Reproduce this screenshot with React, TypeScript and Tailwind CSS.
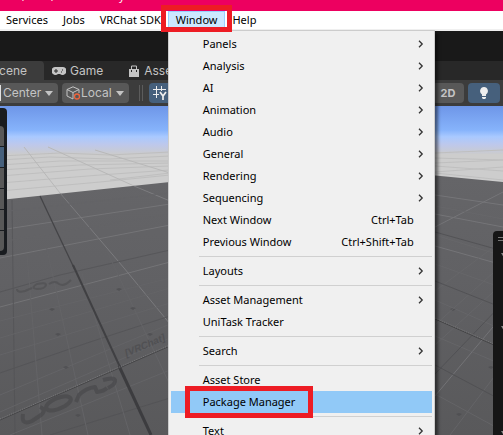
import React from "react";

type Entry = { label: string; shortcut?: string; active?: boolean } | null;

const entries: Entry[] = [
  { label: "Panels" },
  { label: "Analysis" },
  { label: "AI" },
  { label: "Animation" },
  { label: "Audio" },
  { label: "General" },
  { label: "Rendering" },
  { label: "Sequencing" },
  { label: "Next Window", shortcut: "Ctrl+Tab" },
  { label: "Previous Window", shortcut: "Ctrl+Shift+Tab" },
  null,
  { label: "Layouts" },
  null,
  { label: "Asset Management" },
  { label: "UniTask Tracker", shortcut: "" },
  null,
  { label: "Search" },
  null,
  { label: "Asset Store", shortcut: "" },
  { label: "Package Manager", shortcut: "", active: true },
  null,
  { label: "Text" },
];

function Submenu() {
  return (
    <svg className="mr-2 h-2 w-1.5" viewBox="0 0 6 8" fill="none" stroke="#333" strokeWidth="1.3" aria-hidden="true">
      <path d="M1 0.8 4.2 4 1 7.2" />
    </svg>
  );
}

function WindowMenu() {
  return (
    <div role="menu" className="absolute top-full left-0 mt-px w-[267px] border border-[#cccccc] bg-[#f0f0f0] p-0.5 shadow-[3px_3px_3px_rgba(0,0,0,0.5)]">
      {entries.map((e, i) =>
        e === null ? (
          <div key={i} role="separator" className="ml-7 flex h-[7px] items-center">
            <div className="h-px w-full bg-[#d0d0d0]" />
          </div>
        ) : (
          <button
            key={i}
            role="menuitem"
            className={"relative flex h-[22px] w-full items-center justify-between pl-8 text-left " + (e.active ? "bg-[#91c9f7]" : "")}
          >
            <span>{e.label}</span>
            {e.shortcut === undefined ? <Submenu /> : <span className="mr-[18px]">{e.shortcut}</span>}
            {e.active && <span className="pointer-events-none absolute -top-[5px] left-3.5 h-8 w-32 border-[5px] border-[#ed1c24]" />}
          </button>
        ),
      )}
    </div>
  );
}

function Caret() {
  return (
    <svg className="h-[5px] w-2" viewBox="0 0 8 5" fill="#c4c4c4" aria-hidden="true">
      <path d="M0 0h8L4 5z" />
    </svg>
  );
}

const lines = (list: string[], stroke: string, width = 1) => (
  <path d={list.join("")} stroke={stroke} strokeWidth={width} fill="none" />
);

function Scene() {
  return (
    <svg className="absolute inset-0 h-full w-full" viewBox="0 106 503 329" preserveAspectRatio="none" aria-hidden="true">
      <defs>
        <linearGradient id="sky" x1="0" y1="0" x2="0" y2="1">
          <stop offset="0" stopColor="#6e96e8" />
          <stop offset="0.5" stopColor="#86b3fb" />
          <stop offset="0.64" stopColor="#a9c9ff" />
          <stop offset="0.8" stopColor="#bdc8ec" />
          <stop offset="1" stopColor="#cbcbcd" />
        </linearGradient>
        <linearGradient id="floor" x1="0" y1="0" x2="0" y2="1">
          <stop offset="0" stopColor="#656568" />
          <stop offset="0.4" stopColor="#616164" />
          <stop offset="1" stopColor="#59595b" />
        </linearGradient>
      </defs>
      <rect y="106" width="503" height="329" fill="#cdcdcd" />
      <rect y="106" width="503" height="48" fill="url(#sky)" />
      {lines(["M0 156l60-3 50 2 60-3", "M0 160l50-3 60 2 60-3", "M0 165l60-4 110 0", "M0 170l80-5 90-2", "M0 176l90-7 80-3", "M0 183l100-8 70-5", "M0 191l100-9 70-7", "M110 180l60-7"], "#bfbfbf")}
      {lines(["M24 147 60 193", "M48 147 134 186", "M95 150 170 173"], "#b8b8b8")}
      {lines(["M435 153l68-3", "M435 158l68 2", "M435 163l68-3", "M435 166l68 5", "M435 172l68-5", "M435 173l68 7"], "#bfbfbf")}
      <path d="M0 200 170 182V435H0z" fill="url(#floor)" />
      <path d="M430 175 503 182V435H430z" fill="url(#floor)" />
      <g opacity="0.6">
        {lines(["M0 230 170 204", "M0 258 170 225", "M0 307 170 262"], "#808083")}
        {lines(["M60 193 124 268", "M124 268 170 324", "M134 186 170 201"], "#8c8c8f")}
        {lines(["M0 292 60 275 170 250", "M0 373 90 342 170 316", "M50 435 170 398"], "#505053")}
        {lines(["M12 200 15 435"], "#515154")}
      </g>
      {lines(["M0 321 170 278", "M0 338 170 288", "M0 355 170 303", "M0 395 170 324", "M0 412 170 338", "M10 435 170 370", "M27 255 42 435", "M46 245 88 435", "M82 274 130 435", "M105 247 170 385", "M0 212 170 193", "M0 242 170 214"], "#646467")}
      <path d="M40 196 75 270" stroke="#444447" strokeWidth="1.3" fill="none" />
      <path d="M73 265 120 367" stroke="#404043" strokeWidth="2" />
      <path d="M119 366 151 435" stroke="#3c3c3f" strokeWidth="3" />
      <path d="M0 420 170 346" stroke="#464648" />
      <path d="M0 419 170 345" stroke="#7b7b7d" strokeDasharray="1 1" />
      <g fill="none" stroke="#49494c" strokeLinejoin="round">
        <path strokeWidth="4" opacity="0.7" d="M23 414q-2 12 9 7l9-6q6-5-1-8M55 399q-13 7-7 11 6 2 17-4 9-6 4-9-4-2-14 2zM76 402l3-7q7-7 16-8l2 5q7-1 10-4M103 380q10-3 12 0 1 4-7 8" />
        <path strokeWidth="2" opacity="0.5" d="M17 289q0 4 8 2l7-3M37 284q-7 4 0 5 8 0 9-4 0-3-9-1zM49 284q6-4 10 0 5 3 12-4" />
      </g>
      <g transform="translate(126 357) rotate(-23) skewX(-12)" fill="#4b4b4e" opacity="0.7">
        <text fontFamily="Liberation Sans, sans-serif" fontSize="10" fontWeight="bold">[VRChat]</text>
      </g>
      <g fill="#4b4b4e" opacity="0.65">
        {[[52, 309], [58, 334], [66, 367], [78, 415], [119, 289], [133, 308], [150, 334], [453, 309], [491, 367], [459, 414]].map(([x, y]) => (
          <path key={`${x}-${y}`} d={`M${x - 3} ${y}l3-1 3 1-3 2z`} />
        ))}
      </g>
      <g opacity="0.7">
        {lines(["M435 195 503 205", "M435 214 503 227", "M435 246 503 265", "M435 227 503 192", "M435 396 503 315"], "#7d7d80")}
        {lines(["M435 206 503 219", "M435 235 503 256", "M435 291 503 240", "M435 264 503 288", "M435 300 503 330", "M435 336 503 365", "M435 394 503 431", "M435 325 503 264", "M450 435 503 365", "M435 345 503 283"], "#69696c")}
        {lines(["M435 232 503 251", "M435 281 503 308", "M435 365 503 401", "M435 374 503 303"], "#4d4d50")}
      </g>
      <path d="M435 319 503 349" stroke="#444446" />
      <path d="M435 318 503 348" stroke="#777779" strokeDasharray="1 1" />
    </svg>
  );
}

export default function App() {
  return (
    <div className="flex h-screen flex-col overflow-hidden bg-[#191919] font-['Noto_Sans','Noto_Sans_CJK_JP',sans-serif] text-[11px] text-black">
      <header className="h-[11px] shrink-0 overflow-hidden bg-[#ed0060]">
        <div className="-mt-3 flex h-4 pl-[22px] leading-4 text-white">
          <span className="w-[29px]">,</span>
          <span className="w-[68px]">,</span>
          <span>y</span>
        </div>
      </header>
      <nav className="relative z-10 flex h-5 shrink-0 border-b-2 border-[#f0f0f0] bg-white leading-[18px]">
        <button className="pr-[7px] pl-1.5">Services</button>
        <button className="px-2">Jobs</button>
        <button className="px-[7px]">VRChat SDK</button>
        <div className="relative">
          <button className="h-full border border-[#99d1ff] bg-[#cce8ff] px-[7px] leading-4">Window</button>
          <WindowMenu />
          <span className="pointer-events-none absolute -inset-x-[7px] -top-1.5 h-[27px] border-[5px] border-[#ed1c24]" />
        </div>
        <button className="px-[7px]">Help</button>
      </nav>

      <div className="h-[30px] shrink-0" />
      <div className="flex h-[19px] shrink-0 bg-[#282828] font-[Inter,sans-serif] text-xs text-[#c4c4c4]">
        <button className="flex w-11 items-center justify-end rounded-tr-sm bg-[#3c3c3c] pr-[17px]">Scene</button>
        <button className="ml-2 flex items-center gap-1">
          <svg className="h-2.5 w-3.5" viewBox="0 0 14 10" aria-hidden="true">
            <path fill="#c4c4c4" d="M4 1h6a4 4 0 1 1-2 7H6a4 4 0 1 1-2-7z" />
            <path stroke="#282828" d="M4 3v4M2 5h4M9 6h1M10 4h1" />
          </svg>
          Game
        </button>
        <button className="ml-[26px] flex items-center gap-[5px]">
          <svg className="h-3 w-2.5" viewBox="0 0 10 12" aria-hidden="true">
            <path fill="#c4c4c4" d="M0 4h10v8H0z" />
            <path fill="none" stroke="#c4c4c4" d="M2.5 4V1h5v3" />
            <path stroke="#282828" d="M2.5 5v2M7.5 5v2" />
          </svg>
          <span className="whitespace-nowrap">Asset Store</span>
        </button>
      </div>
      <div className="flex h-[26px] shrink-0 items-center bg-[#3c3c3c] font-[Inter,sans-serif] text-xs text-[#c4c4c4]">
        <button className="flex h-5 w-[58px] items-center gap-1 rounded-r-sm bg-[#585858]">
          <span className="border-l border-[#e0e0e0] pl-0.5">Center</span>
          <Caret />
        </button>
        <button className="ml-1 flex h-5 w-[67px] items-center rounded-sm bg-[#585858] pl-1">
          <svg className="h-3.5 w-[15px]" viewBox="0 0 15 14" fill="none" aria-hidden="true">
            <path stroke="#c4c4c4" d="M7 13 1 10V3.500L7 .8l6 2.700V7M1 3.500l6 3 6-3M7 6.500V13" />
            <circle cx="11" cy="10.500" r="2.500" stroke="#f0643c" strokeWidth="1.300" />
          </svg>
          <span className="mr-1">Local</span>
          <Caret />
        </button>
        <div className="ml-2.5 h-4 w-1 border-x border-[#5c5c5c]" />
        <button className="ml-1.5 h-5 w-9 rounded-l-sm bg-[#46607c] pl-1" aria-label="Grid">
          <svg className="h-3.5 w-3.5" viewBox="0 0 14 14" fill="none" stroke="#eee" aria-hidden="true">
            <path d="M3.500 0v12M8.500 0v5M0 3.500h13M0 8.500h6" />
            <path strokeWidth="1.700" d="M7 6l3 4 3-4M10 10v4" />
          </svg>
        </button>
        <button className="ml-auto h-5 w-8 rounded-sm bg-[#585858] text-[11px] font-bold">2D</button>
        <button className="mr-[3px] ml-1 flex h-5 w-8 items-center justify-center rounded-sm bg-[#46607c]" aria-label="Lighting">
          <svg className="h-3 w-2" viewBox="0 0 8 12" fill="#eee" aria-hidden="true">
            <path d="M4 0a4 4 0 0 1 2 7.400V9H2V7.400A4 4 0 0 1 4 0zM2 10h4v1L5 12H3l-1-1z" />
          </svg>
        </button>
      </div>

      <main className="relative min-h-0 flex-1">
        <Scene />
        <div className="absolute top-0.5 left-0 flex h-[147px] w-[7px] flex-col gap-px rounded-r-sm bg-[#191c20] pt-[18px]">
          <div className="h-5 w-1 rounded-tr-sm bg-[#585858]" />
          <div className="h-5 w-1 bg-[#46607c]" />
          <div className="h-5 w-1 bg-[#585858]" />
          <div className="h-5 w-1 bg-[#585858]" />
          <div className="h-5 w-1 bg-[#585858]" />
          <div className="h-5 w-1 rounded-br-sm bg-[#585858]" />
        </div>
        <div className="absolute top-[125px] right-0 bottom-0 w-2.5 rounded-tl-sm bg-[#161616]">
          <svg className="h-full w-full" aria-hidden="true">
            <path d="M5 6.500h5M5 9.500h5" stroke="#777" />
            <path d="M8 22h6l-3 5zM8 95h6l-3 5zM8 200h6l-3 5z" fill="#888" />
          </svg>
        </div>
      </main>
    </div>
  );
}
